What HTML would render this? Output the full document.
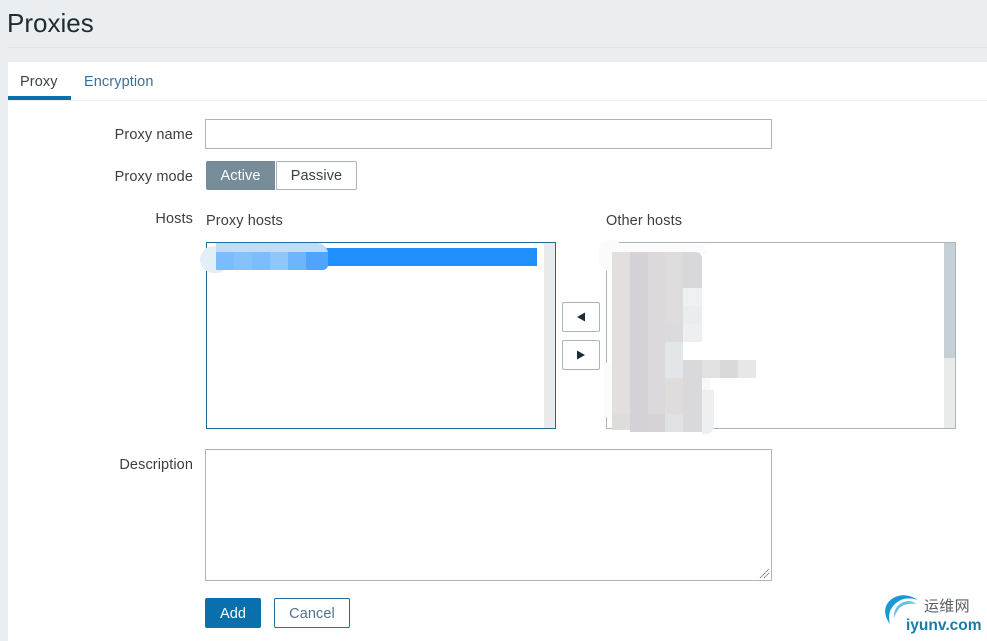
<!DOCTYPE html>
<html><head><meta charset="utf-8"><style>
*{box-sizing:border-box}
html,body{margin:0;padding:0}
body{width:987px;height:641px;overflow:hidden;background:#ebeef0;position:relative;font-family:"Liberation Sans",sans-serif;color:#1f2c33}
div{position:absolute}
.t{position:absolute;white-space:nowrap;font-size:14.5px;letter-spacing:.1px;line-height:18px;color:#3b3f42}
.l{text-align:right;width:120px;left:73px}
</style></head><body>
<div class="t" style="left:7px;top:8px;font-size:26px;letter-spacing:0;line-height:30px;color:#1f2c33">Proxies</div>
<div style="left:8px;top:47px;width:979px;height:1px;background:#dfe4e7"></div>
<div style="left:8px;top:62px;width:979px;height:579px;background:#fff"></div>
<div style="left:8px;top:100px;width:979px;height:1px;background:#ebeef0"></div>
<div style="left:8px;top:96px;width:63px;height:4px;background:#0a70ad"></div>
<div class="t" style="left:20px;top:73px;color:#3b4347">Proxy</div>
<div class="t" style="left:84px;top:73px;color:#3a7096">Encryption</div>

<div class="t l" style="top:126px">Proxy name</div>
<div style="left:205px;top:119px;width:567px;height:30px;border:1px solid #acb5b9;background:#fff"></div>

<div class="t l" style="top:168px">Proxy mode</div>
<div class="t" style="left:206px;top:161px;width:69px;height:29px;background:#768d99;color:#fff;text-align:center;line-height:31px;border-radius:2px 0 0 2px">Active</div>
<div class="t" style="left:276px;top:161px;width:81px;height:29px;border:1px solid #acb5b9;text-align:center;line-height:29px;background:#fff;border-radius:0 2px 2px 0">Passive</div>

<div class="t l" style="top:210px">Hosts</div>
<div class="t" style="left:206px;top:212px">Proxy hosts</div>
<div class="t" style="left:606px;top:212px">Other hosts</div>

<div style="left:206px;top:242px;width:350px;height:187px;border:1px solid #1f6a94;background:#fff"></div>
<div style="left:544px;top:243px;width:11px;height:185px;background:#e9eaea"></div>
<div style="left:216px;top:248px;width:321px;height:18px;background:#2090fe"></div>
<div style="left:200px;top:246px;width:30px;height:27px;border-radius:14px;background:#e4eef6"></div>
<div style="left:216px;top:243px;width:100px;height:9px;background:#c0dcf8"></div>
<div style="left:306px;top:243px;width:22px;height:27px;border-radius:0 11px 6px 0;background:#c0dcf8"></div>
<div style="left:216px;top:252px;width:18px;height:18px;background:#7cbcfc"></div>
<div style="left:234px;top:252px;width:18px;height:18px;background:#86c1fc"></div>
<div style="left:252px;top:252px;width:18px;height:18px;background:#7dbdfc"></div>
<div style="left:270px;top:252px;width:18px;height:18px;background:#90c6fc"></div>
<div style="left:288px;top:252px;width:18px;height:18px;background:#6fb5fd"></div>
<div style="left:306px;top:252px;width:22px;height:18px;background:#4fa5fd;border-radius:0 0 5px 0"></div>

<div style="left:562px;top:302px;width:38px;height:30px;border:1px solid #acb5b9;border-radius:2px;background:#fff"></div>
<div style="left:562px;top:340px;width:38px;height:30px;border:1px solid #acb5b9;border-radius:2px;background:#fff"></div>
<svg style="position:absolute;left:562px;top:302px" width="38" height="68"><path d="M15 15L23 10.500V19.500Z" fill="#1f2c33"/><path d="M23 53L15 48.500V57.500Z" fill="#1f2c33"/></svg>

<div style="left:606px;top:242px;width:350px;height:187px;border:1px solid #acb5b9;background:#fff"></div>
<div style="left:944px;top:243px;width:11px;height:185px;background:#e9eaea"></div>
<div style="left:944px;top:243px;width:11px;height:115px;background:#c5d0d6"></div>
<div style="left:598px;top:240px;width:22px;height:32px;border-radius:12px 6px 6px 14px;background:#fbfbfc"></div>
<div style="left:612px;top:244px;width:96px;height:10px;border-radius:10px 10px 0 0;background:#fbfbfc"></div>
<div style="left:604px;top:363px;width:8px;height:54px;background:#fbfbfb"></div>
<div style="left:702px;top:378px;width:8px;height:14px;background:#f8f8f9"></div>
<div style="left:702px;top:390px;width:12px;height:44px;border-radius:0 0 8px 0;background:#eeeff0"></div>
<div style="left:612px;top:252px;width:18px;height:168px;background:#e3dfdf"></div>
<div style="left:612px;top:414px;width:18px;height:16px;background:#dfdcdc"></div>
<div style="left:630px;top:252px;width:18px;height:180px;background:#d4d2d6"></div>
<div style="left:648px;top:252px;width:17px;height:180px;background:#dbd9db"></div>
<div style="left:648px;top:414px;width:17px;height:18px;background:#d5d3d7"></div>
<div style="left:665px;top:252px;width:18px;height:72px;background:#dedbdc"></div>
<div style="left:665px;top:324px;width:18px;height:18px;background:#dcdadc"></div>
<div style="left:665px;top:342px;width:18px;height:36px;background:#e2e6e9"></div>
<div style="left:665px;top:378px;width:18px;height:36px;background:#e0dcdc"></div>
<div style="left:665px;top:414px;width:18px;height:18px;background:#e0e1e4"></div>
<div style="left:683px;top:252px;width:19px;height:36px;background:#d8d7db;border-radius:0 6px 0 0"></div>
<div style="left:683px;top:288px;width:19px;height:18px;background:#edf1f2"></div>
<div style="left:683px;top:306px;width:19px;height:18px;background:#e9edef"></div>
<div style="left:683px;top:324px;width:19px;height:18px;background:#edeff1"></div>
<div style="left:683px;top:360px;width:19px;height:72px;background:#d9d9dc"></div>
<div style="left:702px;top:360px;width:18px;height:18px;background:#e1e1e4"></div>
<div style="left:720px;top:360px;width:18px;height:18px;background:#d9d9dc"></div>
<div style="left:738px;top:360px;width:18px;height:18px;background:#e7e7e9"></div>

<div class="t l" style="top:456px">Description</div>
<div style="left:205px;top:449px;width:567px;height:132px;border:1px solid #acb5b9;background:#fff"></div>
<svg style="position:absolute;left:758px;top:567px" width="13" height="13"><path d="M2 11L11 2M6 11L11 6" stroke="#777" stroke-width="1" stroke-dasharray="1.500 .5" fill="none"/></svg>

<div class="t" style="left:205px;top:598px;width:56px;height:30px;background:#0a70ad;border-radius:2px;color:#fff;text-align:center;line-height:32px">Add</div>
<div class="t" style="left:274px;top:598px;width:76px;height:30px;border:1px solid #1f6f9c;border-radius:2px;color:#4f7390;text-align:center;line-height:30px;background:#fff">Cancel</div>

<svg style="position:absolute;left:880px;top:590px" width="50" height="46"><path d="M10 34C1 22 5 10 18 6C25 4 32 6 38 10C30 7 22 8 16 13C9 19 8 26 10 34Z" fill="#1a97d5"/><path d="M14 28C13 20 18 12 28 11C31 11 34 12 36 14C28 13 21 15 18 20C16 23 15 25 14 28Z" fill="#6cc0e8"/></svg>
<div class="t" style="left:924px;top:599px;font-family:'Liberation Sans','Noto Sans CJK SC',sans-serif;font-size:15px;letter-spacing:.3px;line-height:16px;color:#5a5f63">运维网</div>
<div class="t" style="left:906px;top:617px;font-size:15.500px;letter-spacing:0;font-weight:bold;line-height:18px;color:#1a7aa8">iyunv.com</div>
</body></html>
